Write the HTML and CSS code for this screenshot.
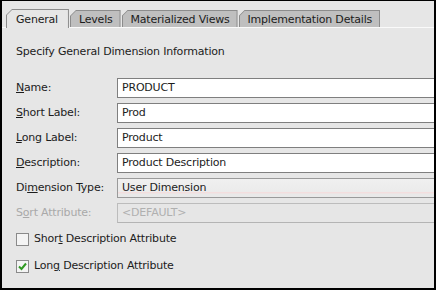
FILE: index.html
```html
<!DOCTYPE html>
<html lang="en">
  <head>
    <meta charset="UTF-8" />
    <title>Dimension Properties</title>
    <link rel="stylesheet" href="styles.css">
  </head>
  <body>
    <div class="frame">
      <div class="tabs">
        <div class="tab selected"><span>General</span></div>
        <div class="tab"><span>Levels</span></div>
        <div class="tab"><span>Materialized Views</span></div>
        <div class="tab"><span>Implementation Details</span></div>
      </div>

      <div class="panel">
        <p class="intro">Specify General Dimension Information</p>

        <div class="rows">
          <label class="label"><u>N</u>ame:</label>
          <div class="field">PRODUCT</div>

          <label class="label"><u>S</u>hort Label:</label>
          <div class="field">Prod</div>

          <label class="label"><u>L</u>ong Label:</label>
          <div class="field">Product</div>

          <label class="label"><u>D</u>escription:</label>
          <div class="field">Product Description</div>

          <label class="label">Di<u>m</u>ension Type:</label>
          <div class="field combo">User Dimension</div>

          <label class="label disabled">S<u>o</u>rt Attribute:</label>
          <div class="field off">&lt;DEFAULT&gt;</div>
        </div>

        <div class="checks">
          <div class="check">
            <span class="box"></span>
            <span>Shor<u>t</u> Description Attribute</span>
          </div>
          <div class="check">
            <span class="box">
              <svg width="11" height="11" viewBox="0 0 11 11">
                <path d="M2 5.5 L4.5 8 L9 2.5" fill="none" stroke="#2f9a22" stroke-width="2"/>
              </svg>
            </span>
            <span>Lon<u>g</u> Description Attribute</span>
          </div>
        </div>
      </div>
    </div>
  </body>
</html>
```

FILE: styles.css
```css
body {
  margin: 0;
  font-family: "DejaVu Sans", sans-serif;
  font-size: 11px;
  letter-spacing: -0.2px;
  color: #1c1c1c;
}
.frame {
  width: 436px;
  height: 290px;
  box-sizing: border-box;
  border: 2px solid #000;
  border-top-width: 1px;
  background: #e6e6e6;
  overflow: hidden;
}
.tabs {
  display: flex;
  align-items: flex-end;
  gap: 1px;
  height: 26px;
  padding-left: 4px;
  border-bottom: 1px solid #fafafa;
}
.tab {
  height: 16px;
  padding: 1px 1px 0 1px;
  background: #8c8c8c;
  clip-path: polygon(0 6px, 6px 0, 100% 0, 100% 100%, 0 100%);
}
.tab span {
  display: flex;
  align-items: center;
  height: 100%;
  padding: 0 7px 0 8px;
  background: #bfbfbf;
  clip-path: polygon(0 5px, 5px 0, 100% 0, 100% 100%, 0 100%);
}
.tab.selected {
  height: 18px;
  margin-bottom: -1px;
}
.tab.selected span {
  background: #e6e6e6;
  padding: 0 10px 0 9px;
}
.panel {
  padding: 0 0 0 14px;
}
.intro {
  margin: 17px 0 0;
  line-height: 14px;
}
.rows {
  display: grid;
  grid-template-columns: 101px 1fr;
  row-gap: 5px;
  margin-top: 19px;
  align-items: center;
}
.label {
  line-height: 20px;
}
.label.disabled {
  color: #a9a9a9;
}
.field {
  height: 18px;
  line-height: 18px;
  border: 1px solid #7f7f7f;
  border-right: none;
  background: #fff;
  padding-left: 4px;
}
.field.combo {
  border-color: #9a9a9a;
  background: linear-gradient(#f0f0f0, #ebebeb 70%, #f3dede 75%, #e9e9e9 85%);
}
.field.off {
  border-color: #bcbcbc;
  border-bottom-color: #b4b4b4;
  background: #e6e6e6;
  color: #b0b0b0;
}
.checks {
  display: flex;
  flex-direction: column;
  gap: 13px;
  margin-top: 9px;
}
.check {
  display: flex;
  align-items: center;
  gap: 5px;
  line-height: 14px;
}
.box {
  width: 11px;
  height: 11px;
  border: 1px solid #8a8a8a;
  background: #f4f4f4;
  display: flex;
}
```
